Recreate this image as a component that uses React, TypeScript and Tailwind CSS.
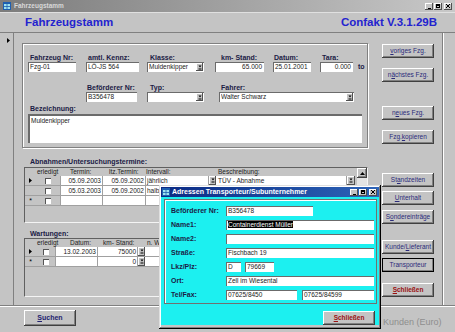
import type { ReactNode } from 'react';

const RAISED =
  'bg-[#c4c4c4] shadow-[inset_-1px_-1px_0_#404040,inset_1px_1px_0_#ffffff,inset_-2px_-2px_0_#808080]';
const RAISED_SM = 'bg-[#c4c4c4] shadow-[inset_-1px_-1px_0_#505050,inset_1px_1px_0_#ffffff]';
const SUNKEN = 'bg-white shadow-[inset_1px_1px_0_#6b6b6b]';

function Label({ children, className = '' }: { children: ReactNode; className?: string }) {
  return (
    <div className={`h-[9px] text-[7px] leading-[9px] font-bold text-[#1b1b45] whitespace-nowrap ${className}`}>
      {children}
    </div>
  );
}

function Box({ children, className = '' }: { children?: ReactNode; className?: string }) {
  return (
    <div
      className={`h-[10px] ${SUNKEN} px-[2px] text-[6.5px] leading-[10px] text-[#222] whitespace-nowrap overflow-hidden ${className}`}
    >
      {children}
    </div>
  );
}

function Arrow() {
  return (
    <svg width="4" height="5" viewBox="0 0 4 5">
      <path d="M0.5 0.5h3L2 2.5z" fill="#000" />
      <path d="M0.5 4h3" stroke="#000" strokeWidth="1" />
    </svg>
  );
}

function DropBtn({ className = '' }: { className?: string }) {
  return (
    <div className={`w-[7px] h-full flex items-center justify-center shrink-0 ${RAISED_SM} ${className}`}>
      <Arrow />
    </div>
  );
}

function Combo({ children, className = '' }: { children?: ReactNode; className?: string }) {
  return (
    <div className={`h-[10px] ${SUNKEN} flex pl-[2px] pr-[1px] py-[1px] ${className}`}>
      <span className="flex-1 text-[6.5px] leading-[8px] text-[#222] whitespace-nowrap overflow-hidden">
        {children}
      </span>
      <DropBtn />
    </div>
  );
}

function Field({
  label,
  labelClass = 'pl-[2px]',
  className,
  children,
}: {
  label: string;
  labelClass?: string;
  className: string;
  children: ReactNode;
}) {
  return (
    <div className={`flex flex-col ${className}`}>
      <Label className={labelClass}>{label}</Label>
      {children}
    </div>
  );
}

function Btn({ children, className = '' }: { children: ReactNode; className?: string }) {
  return (
    <div
      className={`h-[14px] w-[52px] flex items-center justify-center text-[6.5px] text-[#2b2b7a] whitespace-nowrap ${RAISED} ${className}`}
    >
      {children}
    </div>
  );
}

function Tri() {
  return (
    <svg width="3" height="5" viewBox="0 0 3 5">
      <path d="M0 0L3 2.5L0 5z" fill="#000" />
    </svg>
  );
}

function Check() {
  return <div className="w-[6px] h-[6px] bg-white shadow-[inset_1px_1px_0_#555]" />;
}

function WinIcon() {
  return (
    <svg width="8" height="8" viewBox="0 0 8 8">
      <rect x="0" y="0" width="8" height="8" fill="#1d5fb0" />
      <rect x="1" y="2" width="6" height="5" fill="#9fe3f0" />
      <path d="M1 4.5h6M4 2v5" stroke="#1d5fb0" strokeWidth="0.8" />
    </svg>
  );
}

function CapBtns() {
  return (
    <div className="flex gap-[1px]">
      <div className={`w-[8px] h-[7px] ${RAISED_SM} flex items-end justify-center pb-[1px]`}>
        <div className="w-[3px] h-[1px] bg-black" />
      </div>
      <div className={`w-[8px] h-[7px] ${RAISED_SM} flex items-center justify-center`}>
        <div className="w-[4px] h-[4px] border border-black border-t-2" />
      </div>
      <div className={`w-[8px] h-[7px] ml-[1px] ${RAISED_SM} flex items-center justify-center`}>
        <svg width="4" height="4" viewBox="0 0 4 4">
          <path d="M0 0L4 4M4 0L0 4" stroke="#000" strokeWidth="1" />
        </svg>
      </div>
    </div>
  );
}

const CELL = 'bg-white border-r border-b border-[#a0a0a0] text-[6.5px] leading-[9px] text-[#222] whitespace-nowrap overflow-hidden';

function Grid1() {
  const rows = [
    { sel: 'tri', t: '05.09.2003', l: '05.09.2002', i: 'jährlich', b: 'TÜV - Abnahme' },
    { sel: '', t: '05.03.2003', l: '05.09.2002', i: 'halb', b: '' },
    { sel: 'new', t: '', l: '', i: '', b: '' },
  ];
  return (
    <div className="ml-[2px] w-[344px] h-[56px] border border-t-[#606060] border-l-[#606060] border-b-[#f4f4f4] border-r-[#f4f4f4] flex">
      <div className="w-[332px] flex flex-col">
        <div className="h-[8px] flex text-[6.5px] leading-[8px] text-[#222] whitespace-nowrap">
          <div className="w-[11px]" />
          <div className="w-[25px] pl-[1px]">erledigt</div>
          <div className="w-[42px] pl-[9px]">Termin:</div>
          <div className="w-[43px] pl-[6px]">ltz.Termin:</div>
          <div className="w-[70px]">Intervall:</div>
          <div className="pl-[2px]">Beschreibung:</div>
        </div>
        {rows.map((r, k) => (
          <div key={k} className="flex h-[10px]">
            <div className="w-[11px] flex items-center justify-center border-b border-[#a0a0a0] text-[7px] leading-[10px]">
              {r.sel === 'tri' ? <Tri /> : r.sel === 'new' ? '*' : null}
            </div>
            <div className="w-[25px] flex items-center justify-center border-b border-r border-[#a0a0a0]">
              <Check />
            </div>
            <div className={`w-[42px] text-right pr-[1px] ${CELL}`}>{r.t}</div>
            <div className={`w-[43px] text-right pr-[1px] ${CELL}`}>{r.l}</div>
            <div className={`w-[63px] pl-[1px] ${CELL}`}>{r.i}</div>
            <div className="w-[7px] border-b border-[#a0a0a0] bg-white">{r.sel !== 'new' && <DropBtn />}</div>
            <div className={`w-[131px] pl-[2px] ${CELL}`}>{r.b}</div>
            <div className="w-[8px] border-b border-[#a0a0a0] bg-white">{r.sel !== 'new' && <DropBtn className="w-[8px]" />}</div>
            <div className="w-[2px] border-b border-[#a0a0a0]" />
          </div>
        ))}
      </div>
      <div className="w-[10px] flex flex-col">
        <div className={`h-[10px] flex items-center justify-center ${RAISED}`}>
          <svg width="5" height="3" viewBox="0 0 5 3">
            <path d="M0 3L2.5 0L5 3z" fill="#000" />
          </svg>
        </div>
        <div className="flex-1 bg-[#e4e4e4]" />
      </div>
    </div>
  );
}

function Grid2() {
  const rows = [
    { sel: 'tri', d: '13.02.2003', km: '75000' },
    { sel: 'new', d: '', km: '0' },
  ];
  return (
    <div className="ml-[2px] w-[344px] h-[59px] border border-t-[#606060] border-l-[#606060] border-b-[#f4f4f4] border-r-[#f4f4f4] flex flex-col">
      <div className="h-[8px] flex text-[6.5px] leading-[8px] text-[#222] whitespace-nowrap">
        <div className="w-[11px]" />
        <div className="w-[20px] pl-[1px]">erledigt</div>
        <div className="w-[42px] pl-[14px]">Datum:</div>
        <div className="w-[47px] pl-[5px]">km- Stand:</div>
        <div className="pl-[2px]">n. W</div>
      </div>
      {rows.map((r, k) => (
        <div key={k} className="flex h-[10px]">
          <div className="w-[11px] flex items-center justify-center border-b border-[#a0a0a0] text-[7px] leading-[10px]">
            {r.sel === 'tri' ? <Tri /> : '*'}
          </div>
          <div className="w-[20px] flex items-center justify-center border-b border-r border-[#a0a0a0]">
            <Check />
          </div>
          <div className={`w-[42px] text-right pr-[1px] ${CELL}`}>{r.d}</div>
          <div className={`w-[40px] text-right pr-[1px] ${CELL}`}>{r.km}</div>
          <div className="w-[7px] border-b border-[#a0a0a0] bg-white">
            <DropBtn />
          </div>
          <div className={`w-[211px] pl-[2px] ${CELL}`} />
        </div>
      ))}
    </div>
  );
}

function Dialog() {
  const full = 'w-[148px]';
  return (
    <div className="absolute left-[159px] top-[185px] w-[222px] h-[144px] bg-[#c4c4c4] p-[2px] shadow-[inset_-1px_-1px_0_#000,inset_1px_1px_0_#dfdfdf,inset_-2px_-2px_0_#808080,inset_2px_2px_0_#fff]">
      <div className="h-[10px] bg-linear-to-r from-[#0c2a84] to-[#2e64b8] flex items-center pl-[1px] pr-[2px]">
        <WinIcon />
        <span className="ml-[2px] text-[7px] leading-[10px] font-bold text-white whitespace-nowrap">
          Adressen Transporteur/Subunternehmer
        </span>
        <div className="ml-auto">
          <CapBtns />
        </div>
      </div>
      <div className="h-[128px] bg-[#1cf0f0] pl-[3px] pt-[2px] flex flex-col">
        <div className="w-[213px] h-[105px] border border-[#707070] shadow-[inset_1px_1px_0_#ffffff] pl-[6px] pt-[6px] flex flex-col gap-[4px]">
          {[
            ['Beförderer Nr:', <Box className="w-[87px]">B356478</Box>],
            [
              'Name1:',
              <Box className={full}>
                <span className="bg-black text-white">Containerdienst Müller</span>
              </Box>,
            ],
            ['Name2:', <Box className={full} />],
            ['Straße:', <Box className={full}>Fischbach 19</Box>],
            [
              'Lkz/Plz:',
              <div className="flex gap-[4px]">
                <Box className="w-[15px]">D</Box>
                <Box className="w-[29px]">79669</Box>
              </div>,
            ],
            ['Ort:', <Box className={full}>Zell im Wiesental</Box>],
            [
              'Tel/Fax:',
              <div className="flex gap-[5px]">
                <Box className="w-[71px]">07625/8450</Box>
                <Box className="w-[72px]">07625/84599</Box>
              </div>,
            ],
          ].map(([l, c], k) => (
            <div key={k} className="flex h-[10px] items-center">
              <div className="w-[55px] text-[7px] leading-[10px] font-bold text-[#1b1b45] whitespace-nowrap">{l}</div>
              {c}
            </div>
          ))}
        </div>
        <div className="self-end mr-[4px] mt-[7px]">
          <Btn className="w-[41px] h-[13px] font-bold text-[#9a1010]">
            <span className="underline">S</span>chließen
          </Btn>
        </div>
      </div>
    </div>
  );
}

export default function App() {
  return (
    <div className="w-[455px] h-[332px] relative overflow-hidden bg-[#c4c4c4] font-['Liberation_Sans',Arial,sans-serif] flex flex-col">
      {/* title bar */}
      <div className="h-[13px] bg-linear-to-r from-[#7c7c7c] to-[#c8c8c8] flex items-center pl-[3px] pr-[3px] border-b border-[#e0e0e0]">
        <WinIcon />
        <span className="ml-[3px] text-[6.5px] font-bold text-[#d8d8d8] leading-[12px]">Fahrzeugstamm</span>
        <div className="ml-auto">
          <CapBtns />
        </div>
      </div>

      {/* form header */}
      <div className="h-[20px] flex items-center pl-[25px] pr-[18px] border-b border-[#808080]">
        <span className="text-[11.5px] font-bold text-[#2323cf]">Fahrzeugstamm</span>
        <span className="ml-auto text-[11.5px] font-bold text-[#2323cf]">Confakt V.3.1.29B</span>
      </div>

      {/* detail */}
      <div className="h-[272px] flex">
        <div className="w-[14px] border-r border-[#808080] pl-[7px] pt-[5px]">
          <Tri />
        </div>
        <div className="w-[428px] flex">
          <div className="w-[354px] pl-[8px] pt-[10px] flex flex-col">
            <div className="w-[346px] h-[105px] border border-[#808080] shadow-[inset_1px_1px_0_#ffffff,1px_1px_0_#ffffff] pt-[9px] pl-[5px] flex flex-col">
              <div className="flex items-start">
                <Field label="Fahrzeug Nr:" className="w-[48px]">
                  <Box>Fzg-01</Box>
                </Field>
                <Field label="amtl. Kennz:" className="ml-[10px] w-[53px]">
                  <Box>LÖ-JS 564</Box>
                </Field>
                <Field label="Klasse:" labelClass="pl-[3px]" className="ml-[8px] w-[57px]">
                  <Combo>Muldenkipper</Combo>
                </Field>
                <Field label="km- Stand:" labelClass="pl-[6px]" className="ml-[11px] w-[49px]">
                  <Box className="text-right">65.000</Box>
                </Field>
                <Field label="Datum:" labelClass="pl-[1px]" className="ml-[9px] w-[38px]">
                  <Box>25.01.2001</Box>
                </Field>
                <Field label="Tara:" className="ml-[9px] w-[33px]">
                  <Box className="text-right">0.000</Box>
                </Field>
                <div className="ml-[5px] mt-[9px] text-[7px] leading-[10px] font-bold text-[#1b1b45]">to</div>
              </div>
              <div className="flex items-start mt-[11px] pl-[58px]">
                <Field label="Beförderer Nr:" labelClass="pl-[1px]" className="w-[51px]">
                  <Box>B356478</Box>
                </Field>
                <Field label="Typ:" labelClass="pl-[3px]" className="ml-[10px] w-[57px]">
                  <Combo />
                </Field>
                <Field label="Fahrer:" className="ml-[15px] w-[135px]">
                  <Combo>Walter Schwarz</Combo>
                </Field>
              </div>
              <Label className="mt-[2px] pl-[2px]">Bezeichnung:</Label>
              <div className="mt-[1px] w-[334px] h-[29px] bg-white shadow-[inset_2px_2px_0_#6b6b6b] pl-[3px] pt-[3px] text-[6.5px] leading-[8px] text-[#222]">
                Muldenkipper
              </div>
            </div>

            <Label className="mt-[9px] pl-[8px]">Abnahmen/Untersuchungstermine:</Label>
            <div className="mt-[1px]">
              <Grid1 />
            </div>
            <Label className="mt-[6px] pl-[8px]">Wartungen:</Label>
            <Grid2 />
          </div>

          <div className="ml-[14px] w-[52px] pt-[11px] flex flex-col">
            <Btn>
              <span className="underline">v</span>origes Fzg.
            </Btn>
            <Btn className="mt-[10px]">
              n<span className="underline">ä</span>chstes Fzg.
            </Btn>
            <Btn className="mt-[24px]">
              n<span className="underline">e</span>ues Fzg.
            </Btn>
            <Btn className="mt-[10px]">
              Fzg. <span className="underline">k</span>opieren
            </Btn>
            <Btn className="mt-[29px]">
              St<span className="underline">a</span>ndzeiten
            </Btn>
            <Btn className="mt-[4px]">
              <span className="underline">U</span>nterhalt
            </Btn>
            <Btn className="mt-[5px]">
              S<span className="underline">o</span>ndereinträge
            </Btn>
            <Btn className="mt-[16px]">
              Kunde/<span className="underline">L</span>ieferant
            </Btn>
            <Btn className="mt-[4px] outline outline-1 outline-black -outline-offset-1">Transporteur</Btn>
            <Btn className="mt-[11px] font-bold text-[#9a1010]">
              <span className="underline">S</span>chließen
            </Btn>
          </div>
        </div>
        <div className="flex-1 border-l border-[#808080] shadow-[inset_1px_0_0_#ffffff]" />
      </div>

      {/* footer */}
      <div className="flex-1 border-t border-[#808080] shadow-[inset_0_1px_0_#ffffff] flex items-start">
        <Btn className="ml-[24px] mt-[4px] h-[16px] font-bold text-[7px] text-[#232370]">
          <span className="underline">S</span>uchen
        </Btn>
        <span className="ml-[307px] mt-[11px] text-[9px] leading-[10px] text-[#8e8e8e] whitespace-nowrap">
          Kunden (Euro)
        </span>
      </div>

      <Dialog />
    </div>
  );
}
